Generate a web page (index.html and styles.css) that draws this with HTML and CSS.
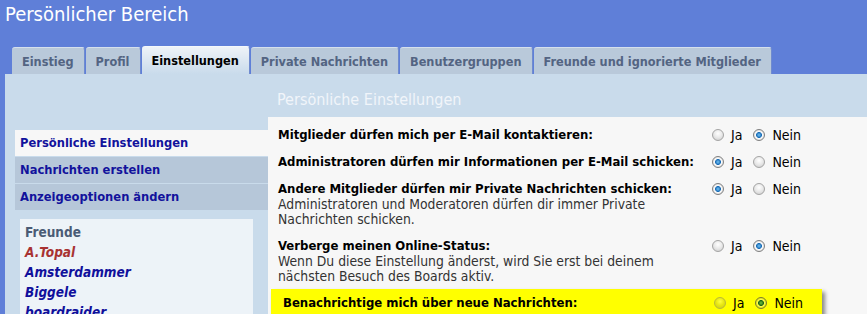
FILE: index.html
```html
<!DOCTYPE html>
<html lang="de">
<head>
    <meta charset="UTF-8">
    <meta name="viewport" content="width=device-width, initial-scale=1.0">
    <title>Persönlicher Bereich</title>
    <link rel="stylesheet" href="styles.css">
</head>
<body>

<div class="page-head">
    <h1>Persönlicher Bereich</h1>
</div>

<ul class="tabs">
    <li><a href="#">Einstieg</a></li>
    <li><a href="#">Profil</a></li>
    <li class="active"><a href="#">Einstellungen</a></li>
    <li><a href="#">Private Nachrichten</a></li>
    <li><a href="#">Benutzergruppen</a></li>
    <li><a href="#">Freunde und ignorierte Mitglieder</a></li>
</ul>

<div class="panel">
    <div class="side">
        <ul class="side-menu">
            <li class="active"><a href="#">Persönliche Einstellungen</a></li>
            <li><a href="#">Nachrichten erstellen</a></li>
            <li><a href="#">Anzeigeoptionen ändern</a></li>
        </ul>

        <div class="friends">
            <h3>Freunde</h3>
            <a href="#" class="online">A.Topal</a>
            <a href="#">Amsterdammer</a>
            <a href="#">Biggele</a>
            <a href="#">boardraider</a>
        </div>
    </div>

    <div class="main">
        <h2>Persönliche Einstellungen</h2>
        <div class="sheet">
            <div class="row">
                <div class="label"><strong>Mitglieder dürfen mich per E-Mail kontaktieren:</strong></div>
                <div class="options">
                    <span class="radio"></span><span class="opt">Ja</span>
                    <span class="radio checked"></span><span class="opt">Nein</span>
                </div>
            </div>
            <div class="row">
                <div class="label"><strong>Administratoren dürfen mir Informationen per E-Mail schicken:</strong></div>
                <div class="options">
                    <span class="radio checked"></span><span class="opt">Ja</span>
                    <span class="radio"></span><span class="opt">Nein</span>
                </div>
            </div>
            <div class="row">
                <div class="label">
                    <strong>Andere Mitglieder dürfen mir Private Nachrichten schicken:</strong>
                    <p>Administratoren und Moderatoren dürfen dir immer Private<br>Nachrichten schicken.</p>
                </div>
                <div class="options">
                    <span class="radio checked"></span><span class="opt">Ja</span>
                    <span class="radio"></span><span class="opt">Nein</span>
                </div>
            </div>
            <div class="row">
                <div class="label">
                    <strong>Verberge meinen Online-Status:</strong>
                    <p>Wenn Du diese Einstellung änderst, wird Sie erst bei deinem<br>nächsten Besuch des Boards aktiv.</p>
                </div>
                <div class="options">
                    <span class="radio"></span><span class="opt">Ja</span>
                    <span class="radio checked"></span><span class="opt">Nein</span>
                </div>
            </div>
            <div class="row notice">
                <div class="label"><strong>Benachrichtige mich über neue Nachrichten:</strong></div>
                <div class="options">
                    <span class="radio"></span><span class="opt">Ja</span>
                    <span class="radio checked"></span><span class="opt">Nein</span>
                </div>
            </div>
        </div>
    </div>
</div>

</body>
</html>
```

FILE: styles.css
```css
* {
    margin: 0;
    padding: 0;
    box-sizing: border-box;
}

body, html {
    width: 100%;
    height: 100%;
    overflow: hidden;
}

body {
    font-family: "DejaVu Sans Condensed", "DejaVu Sans", sans-serif;
    font-size: 13px;
    background-color: #5f7fd8;
    display: flex;
    flex-direction: column;
}

a {
    text-decoration: none;
}

/* Header */
.page-head {
    flex-shrink: 0;
    height: 46px;
    padding: 4px 5px 0;
}

.page-head h1 {
    font-size: 20px;
    font-weight: normal;
    line-height: 20px;
    color: #fff;
}

/* Tabs */
.tabs {
    flex-shrink: 0;
    list-style: none;
    display: flex;
    align-items: flex-end;
    gap: 1px;
    height: 28px;
    padding-left: 12px;
}

.tabs a {
    display: block;
    height: 27px;
    line-height: 27px;
    padding: 0 10px;
    font-size: 12.6px;
    font-weight: bold;
    color: #536482;
    background-color: #b9c9da;
    border-radius: 3px 3px 0 0;
    border-top: 1px solid #d5e0ec;
    border-right: 1px solid #6f8bcf;
}

.tabs .active a {
    height: 28px;
    line-height: 28px;
    color: #000;
    background: linear-gradient(#eef3f8, #c9dbeb);
    border-top-color: #f4f8fb;
}

/* Main panel */
.panel {
    flex: 1;
    min-height: 0;
    display: flex;
    margin-left: 5px;
    background-color: #c9dbeb;
}

.side {
    width: 263px;
    padding-top: 56px;
}

.side-menu {
    list-style: none;
    margin-left: 10px;
}

.side-menu a {
    display: block;
    height: 26px;
    line-height: 26px;
    margin-bottom: 1px;
    padding-left: 5px;
    font-weight: bold;
    font-size: 12.8px;
    color: #12129c;
    background-color: #b6c7d9;
}

.side-menu .active a {
    background-color: #f7f7f7;
}

.friends {
    margin: 9px 15px 0;
    padding: 3px 5px 0;
    background-color: #edf3f8;
    height: 120px;
}

.friends h3 {
    font-size: 13.5px;
    line-height: 20px;
    color: #4a5b75;
}

.friends a {
    display: block;
    font-size: 13.5px;
    line-height: 20px;
    font-weight: bold;
    font-style: italic;
    color: #10109c;
}

.friends a.online {
    color: #a83232;
}

.main {
    flex: 1;
}

.main h2 {
    height: 43px;
    padding: 16px 0 0 9px;
    font-size: 16px;
    font-weight: normal;
    line-height: 20px;
    color: #f1f5fa;
}

.sheet {
    background-color: #f7f7f7;
    padding-top: 4px;
    height: 100%;
}

/* Settings rows */
.row {
    display: grid;
    grid-template-columns: 434px auto;
    width: 554px;
    padding: 5px 0 5px 10px;
}

.row strong {
    display: block;
    line-height: 17px;
    color: #000;
}

.row p {
    font-size: 13.8px;
    line-height: 15px;
    color: #333;
}

.options {
    display: flex;
    align-items: center;
    height: 17px;
    font-size: 14px;
    color: #000;
}

.opt {
    margin: 0 11px 0 7px;
}

.radio {
    flex-shrink: 0;
    width: 12px;
    height: 12px;
    border-radius: 50%;
    border: 1px solid #a4a4a4;
    background: radial-gradient(circle at 50% 35%, #fff 0, #e8e8e8 50%, #c8c8c8 100%);
}

.radio.checked {
    border-color: #7f7f7f;
    background: radial-gradient(circle, #74c4f6 0, #1c6db6 2.6px, #fff 3.3px, #ededed 4.2px, #d2d2d2 100%);
}

.notice {
    width: 551px;
    margin-left: 3px;
    padding-left: 12px;
    grid-template-columns: 431px auto;
    background-color: #ffff00;
    box-shadow: 3px 3px 4px rgba(0, 0, 0, 0.45);
}

.notice .radio {
    border-color: #b9b93a;
    background: radial-gradient(circle at 50% 35%, #ffff40 0, #e6e610 50%, #c8c820 100%);
}

.notice .radio.checked {
    border-color: #7c7c30;
    background: radial-gradient(circle, #70c040 0, #1f6a10 2.6px, #ffff60 3.3px, #eeee20 4.2px, #d0d020 100%);
}
```
